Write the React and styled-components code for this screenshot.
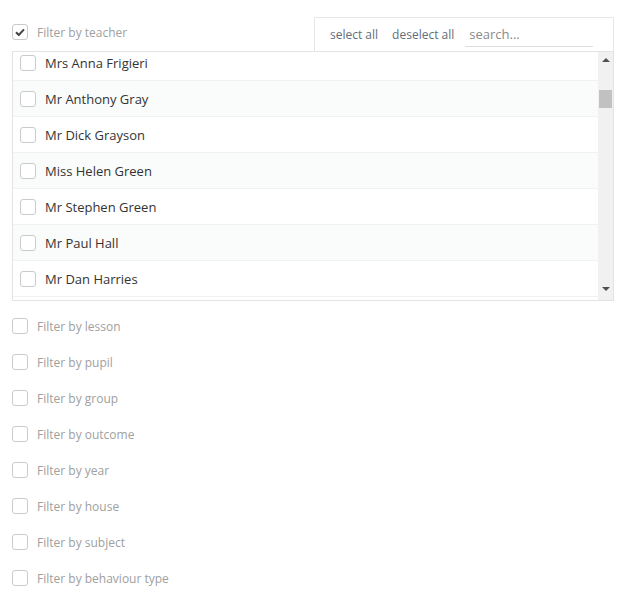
import React from 'react'
import styled, { createGlobalStyle } from 'styled-components'

const GlobalStyle = createGlobalStyle`
    body {
        margin: 0;
        background: #fff;
        font-family: "Open Sans", "Liberation Sans", sans-serif;
    }
`

const Page = styled.div`
    width: 602px;
    padding: 17px 0 0 12px;
`

const Header = styled.div`
    display: flex;
    justify-content: space-between;
    height: 34px;
`

const FilterRow = styled.label`
    display: flex;
    align-items: center;
    gap: 9px;
    height: 16px;
    padding-top: ${p => p.top || 0}px;
    margin-bottom: ${p => p.gap || 0}px;
    font-size: 12px;
    color: #a0a0a0;
    cursor: pointer;
`

const Box = styled.span`
    box-sizing: border-box;
    width: 16px;
    height: 16px;
    flex: none;
    border: 1px solid #cacaca;
    border-radius: 3px;
    background: #fff;
    display: flex;
    align-items: center;
    justify-content: center;
`

const Toolbar = styled.div`
    box-sizing: border-box;
    width: 300px;
    height: 34px;
    border: 1px solid #e6e6e6;
    border-bottom: none;
    display: flex;
    align-items: center;
    padding: 0 19px 0 15px;
    gap: 14px;
    font-size: 12px;
    white-space: nowrap;
`

const ToolLink = styled.a`
    flex: none;
    color: #5f6e7c;
    text-decoration: none;
    cursor: pointer;
`

const Search = styled.input`
    width: 128px;
    flex: none;
    margin-left: -3px;
    border: none;
    border-bottom: 1px solid #dcdcdc;
    outline: none;
    padding: 2px 4px 3px;
    font-family: inherit;
    font-size: 13px;
    color: #555;
    box-sizing: border-box;
    &::placeholder {
        color: #8a8a8a;
    }
`

const ListBox = styled.div`
    box-sizing: border-box;
    height: 250px;
    border: 1px solid #e3e3e3;
    display: flex;
    overflow: hidden;
`

const Rows = styled.div`
    flex: 1;
    overflow: hidden;
`

const RowsInner = styled.div`
    margin-top: -7px;
`

const Row = styled.div`
    height: 36px;
    box-sizing: border-box;
    border-bottom: 1px solid #f0f2f2;
    background: ${p => (p.alt ? '#fafcfc' : '#fff')};
    display: flex;
    align-items: center;
    gap: 9px;
    padding-left: 7px;
    font-size: 13px;
    color: #333;
`

const Scrollbar = styled.div`
    width: 15px;
    background: #f1f1f1;
    display: flex;
    flex-direction: column;
    align-items: center;
    padding: 6px 0;
    box-sizing: border-box;
`

const Arrow = styled.span`
    width: 0;
    height: 0;
    border-left: 4px solid transparent;
    border-right: 4px solid transparent;
    ${p => (p.down ? 'border-top: 4px solid #505050;' : 'border-bottom: 4px solid #505050;')}
    margin-top: ${p => (p.down ? 'auto' : '0')};
    margin-bottom: 3px;
`

const Thumb = styled.span`
    width: 13px;
    height: 18px;
    background: #c1c1c1;
    margin-top: 25px;
`

const Others = styled.div`
    padding-top: 17px;
`

const teachers = [
    'Mrs Anna Frigieri',
    'Mr Anthony Gray',
    'Mr Dick Grayson',
    'Miss Helen Green',
    'Mr Stephen Green',
    'Mr Paul Hall',
    'Mr Dan Harries',
]

const filters = [
    'Filter by lesson',
    'Filter by pupil',
    'Filter by group',
    'Filter by outcome',
    'Filter by year',
    'Filter by house',
    'Filter by subject',
    'Filter by behaviour type',
]

const Tick = () => (
    <svg width="10" height="8" viewBox="0 0 10 8">
        <path d="M1 4.2 L3.8 7 L9 1.3" fill="none" stroke="#444" strokeWidth="2" />
    </svg>
)

const App = () => (
    <Page>
        <GlobalStyle />
        <Header>
            <FilterRow top={7}>
                <Box><Tick /></Box>
                Filter by teacher
            </FilterRow>
            <Toolbar>
                <ToolLink>select all</ToolLink>
                <ToolLink>deselect all</ToolLink>
                <Search placeholder="search..." />
            </Toolbar>
        </Header>
        <ListBox>
            <Rows>
                <RowsInner>
                    {teachers.map((t, i) => (
                        <Row key={t} alt={i % 2 === 1}>
                            <Box />
                            {t}
                        </Row>
                    ))}
                </RowsInner>
            </Rows>
            <Scrollbar>
                <Arrow />
                <Thumb />
                <Arrow down />
            </Scrollbar>
        </ListBox>
        <Others>
            {filters.map(f => (
                <FilterRow key={f} gap={20}>
                    <Box />
                    {f}
                </FilterRow>
            ))}
        </Others>
    </Page>
)

export default App
